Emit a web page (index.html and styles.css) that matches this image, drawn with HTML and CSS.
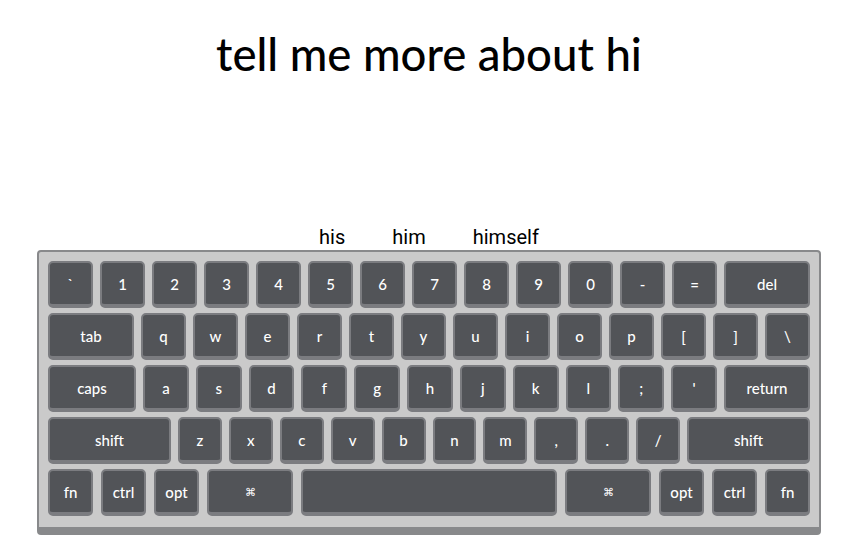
FILE: index.html
```html
<!DOCTYPE html>
<html>
<head>
<meta charset="utf-8">
<link rel="stylesheet" href="styles.css">
</head>
<body>
<div class="page">
  <h1 class="title">tell me more about hi</h1>
  <div class="suggestions">
    <span class="sugg">his</span>
    <span class="sugg">him</span>
    <span class="sugg">himself</span>
  </div>
  <div class="keyboard">
    <div class="row">
      <div class="key">`</div><div class="key">1</div><div class="key">2</div><div class="key">3</div><div class="key">4</div><div class="key">5</div><div class="key">6</div><div class="key">7</div><div class="key">8</div><div class="key">9</div><div class="key">0</div><div class="key">-</div><div class="key">=</div><div class="key grow">del</div>
    </div>
    <div class="row">
      <div class="key grow">tab</div><div class="key">q</div><div class="key">w</div><div class="key">e</div><div class="key">r</div><div class="key">t</div><div class="key">y</div><div class="key">u</div><div class="key">i</div><div class="key">o</div><div class="key">p</div><div class="key">[</div><div class="key">]</div><div class="key">\</div>
    </div>
    <div class="row">
      <div class="key w88">caps</div><div class="key flex">a</div><div class="key flex">s</div><div class="key flex">d</div><div class="key flex">f</div><div class="key flex">g</div><div class="key flex">h</div><div class="key flex">j</div><div class="key flex">k</div><div class="key flex">l</div><div class="key flex">;</div><div class="key flex">'</div><div class="key w86">return</div>
    </div>
    <div class="row">
      <div class="key w123">shift</div><div class="key flex">z</div><div class="key flex">x</div><div class="key flex">c</div><div class="key flex">v</div><div class="key flex">b</div><div class="key flex">n</div><div class="key flex">m</div><div class="key flex">,</div><div class="key flex">.</div><div class="key flex">/</div><div class="key w123">shift</div>
    </div>
    <div class="row last">
      <div class="key">fn</div><div class="key">ctrl</div><div class="key">opt</div><div class="key w86 small">⌘</div><div class="key grow"></div><div class="key w86 small">⌘</div><div class="key">opt</div><div class="key">ctrl</div><div class="key">fn</div>
    </div>
  </div>
</div>
</body>
</html>
```

FILE: styles.css
```css
* { box-sizing: border-box; }
html, body { margin: 0; padding: 0; background: #ffffff; }
.page {
  width: 858px;
  height: 546px;
  display: flex;
  flex-direction: column;
  align-items: center;
}
.title {
  margin: 28px 0 0 0;
  font-family: "Lato", sans-serif;
  font-weight: 500;
  font-size: 45.5px;
  line-height: 52px;
  color: #000;
}
.suggestions {
  margin-top: 145px;
  display: flex;
  gap: 47px;
  font-family: "Roboto", sans-serif;
  font-size: 20px;
  line-height: 24px;
  height: 24px;
  color: #000;
}
.keyboard {
  margin-top: 1px;
  width: 784px;
  height: 285px;
  background: #cacaca;
  border: 2px solid #88898b;
  border-bottom-width: 8px;
  border-radius: 4px;
  padding: 9px 9px 0 9px;
  display: flex;
  flex-direction: column;
  gap: 5px;
}
.row {
  display: flex;
  gap: 7px;
  height: 47px;
}
.row.last { gap: 8px; }
.key {
  flex: 0 0 45px;
  height: 47px;
  background: #525458;
  border: 2px solid #7b7c80;
  border-bottom-width: 4px;
  border-radius: 5px;
  color: #ffffff;
  font-family: "Lato", sans-serif;
  font-size: 15px;
  font-weight: 500;
  display: flex;
  align-items: center;
  justify-content: center;
  padding-top: 1px;
}
.key.grow { flex: 1 1 0; }
.key.flex { flex: 1 1 0; }
.key.w88 { flex: 0 0 88px; }
.key.w86 { flex: 0 0 86px; }
.key.w123 { flex: 0 0 123px; }
.key.small { font-size: 11px; }
```
